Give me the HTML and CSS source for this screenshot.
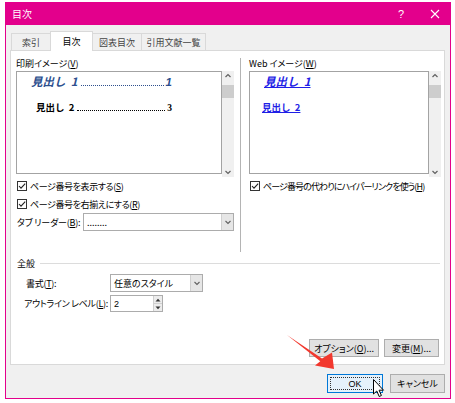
FILE: index.html
```html
<!DOCTYPE html>
<html lang="ja">
<head>
<meta charset="utf-8">
<link rel="stylesheet" href="styles.css">
</head>
<body>
<div class="win">
  <div class="titlebar">
    <span class="title">目次</span>
    <span class="tb-btn help">?</span>
    <span class="tb-btn close"><svg width="10" height="10" viewBox="0 0 10 10"><path d="M1 1L9 9M9 1L1 9" stroke="#fff" stroke-width="1.1" fill="none"/></svg></span>
  </div>
  <div class="client">
    <div class="tabs">
      <div class="tab w1">索引</div>
      <div class="tab w2 active">目次</div>
      <div class="tab w3">図表目次</div>
      <div class="tab w4">引用文献一覧</div>
    </div>
    <div class="panel">
      <div class="cols">
        <div class="col left">
          <div class="lbl">印刷イメージ(<u>V</u>)</div>
          <div class="preview">
            <div class="pbox">
              <div class="toc1"><span class="h">見出し&nbsp;&nbsp;1</span><span class="dots"></span><span class="n">1</span></div>
              <div class="toc2"><span class="h">見出し&nbsp;&nbsp;2</span><span class="dots"></span><span class="n">3</span></div>
            </div>
            <div class="vscroll">
              <svg class="chev" width="12" height="10" viewBox="0 0 12 10"><path d="M3.5 6L6 3.5L8.5 6" stroke="#606060" stroke-width="1.2" fill="none"/></svg>
              <div class="thumb"></div>
              <div class="spacer"></div>
              <svg class="chev" width="12" height="10" viewBox="0 0 12 10"><path d="M3.5 4L6 6.5L8.5 4" stroke="#606060" stroke-width="1.2" fill="none"/></svg>
            </div>
          </div>
          <div class="chk r1"><svg class="cb" width="10" height="10" viewBox="0 0 10 10"><rect x="0.5" y="0.5" width="9" height="9" fill="#fff" stroke="#333"/><path d="M2 5L4 7.2L8.2 2.6" stroke="#222" stroke-width="1.1" fill="none"/></svg><span>ページ番号を表示する(<u>S</u>)</span></div>
          <div class="chk r2"><svg class="cb" width="10" height="10" viewBox="0 0 10 10"><rect x="0.5" y="0.5" width="9" height="9" fill="#fff" stroke="#333"/><path d="M2 5L4 7.2L8.2 2.6" stroke="#222" stroke-width="1.1" fill="none"/></svg><span>ページ番号を右揃えにする(<u>R</u>)</span></div>
          <div class="leader-row">
            <span class="leader-lbl">タブ リーダー(<u>B</u>):</span>
            <div class="combo wide">
              <span class="combo-val">........</span>
              <span class="combo-btn"><svg width="8" height="6" viewBox="0 0 8 6"><path d="M1.5 2L4 4.5L6.5 2" stroke="#606060" stroke-width="1.1" fill="none"/></svg></span>
            </div>
          </div>
        </div>
        <div class="col right">
          <div class="lbl">Web イメージ(<u>W</u>)</div>
          <div class="preview">
            <div class="pbox">
              <div class="web1">見出し&nbsp;&nbsp;1</div>
              <div class="web2">見出し&nbsp;&nbsp;2</div>
            </div>
            <div class="vscroll">
              <svg class="chev" width="12" height="10" viewBox="0 0 12 10"><path d="M3.5 6L6 3.5L8.5 6" stroke="#606060" stroke-width="1.2" fill="none"/></svg>
              <div class="thumb"></div>
              <div class="spacer"></div>
              <svg class="chev" width="12" height="10" viewBox="0 0 12 10"><path d="M3.5 4L6 6.5L8.5 4" stroke="#606060" stroke-width="1.2" fill="none"/></svg>
            </div>
          </div>
          <div class="chk r1 rr"><svg class="cb" width="10" height="10" viewBox="0 0 10 10"><rect x="0.5" y="0.5" width="9" height="9" fill="#fff" stroke="#333"/><path d="M2 5L4 7.2L8.2 2.6" stroke="#222" stroke-width="1.1" fill="none"/></svg><span>ページ番号の代わりにハイパーリンクを使う(<u>H</u>)</span></div>
        </div>
      </div>
      <div class="group-head"><span>全般</span><div class="gline"></div></div>
      <div class="frow f1">
        <span class="flbl">書式(<u>T</u>):</span>
        <div class="combo fmt">
          <span class="combo-val">任意のスタイル</span>
          <span class="combo-btn"><svg width="8" height="6" viewBox="0 0 8 6"><path d="M1.5 2L4 4.5L6.5 2" stroke="#606060" stroke-width="1.1" fill="none"/></svg></span>
        </div>
      </div>
      <div class="frow f2">
        <span class="flbl">アウトライン レベル(<u>L</u>):</span>
        <div class="spin">
          <span class="spin-val">2</span>
          <span class="spin-btns">
            <span class="sb"><svg width="6" height="4" viewBox="0 0 6 4"><path d="M0.5 3.5L3 0.8L5.5 3.5Z" fill="#333"/></svg></span>
            <span class="sb"><svg width="6" height="4" viewBox="0 0 6 4"><path d="M0.5 0.5L3 3.2L5.5 0.5Z" fill="#333"/></svg></span>
          </span>
        </div>
      </div>
      <div class="btnrow">
        <button class="btn opt">オプション(<u>O</u>)...</button>
        <button class="btn chg">変更(<u>M</u>)...</button>
      </div>
    </div>
    <div class="dlg-btns">
      <button class="btn ok"><span class="focus">OK</span></button>
      <button class="btn cancel">キャンセル</button>
    </div>
  </div>
</div>
<svg class="overlay" width="455" height="403" viewBox="0 0 455 403">
  <polygon points="287,335 320.3,361.2 315,365.5 334,369 332,352.5 322,358.6" fill="#f2382e"/>
  <path d="M373.5 379.5 L373.5 394 L376.8 391 L379.2 396.5 L381.4 395.5 L379.1 390.2 L383.5 390.2 Z" fill="#fff" stroke="#000" stroke-width="1"/>
</svg>
</body>
</html>
```

FILE: styles.css
```css
* { box-sizing: border-box; }
html, body { margin: 0; padding: 0; background: #fff; }
body {
  position: relative;
  width: 455px;
  height: 403px;
  overflow: hidden;
  font-family: "Noto Sans CJK JP", "Noto Sans", sans-serif;
  font-size: 9px;
  color: #000;
  font-feature-settings: "palt";
  white-space: nowrap;
}
u { text-decoration: underline; text-underline-offset: 1px; }

.win {
  margin: 2px 0 0 5px;
  width: 446px;
  height: 397px;
  border: 1px solid #e3008c;
  border-top: 0;
  background: #f0f0f0;
  display: flex;
  flex-direction: column;
}
.titlebar {
  height: 23px;
  flex: none;
  background: #e3008c;
  color: #fff;
  display: flex;
  align-items: center;
  padding-left: 6px;
}
.title { font-size: 10px; flex: 1; }
.tb-btn {
  width: 30px;
  height: 23px;
  display: flex;
  align-items: center;
  justify-content: center;
  font-family: "Liberation Sans", sans-serif;
  font-size: 11px;
}
.help { margin-right: 4px; }

.client {
  flex: 1;
  display: flex;
  flex-direction: column;
  padding: 0 5px 5px 4px;
}
.tabs {
  height: 25px;
  flex: none;
  padding: 6px 0 0 1px;
  display: flex;
  align-items: flex-end;
}
.tab {
  height: 17px;
  border: 1px solid #d9d9d9;
  border-bottom: 0;
  margin-left: -1px;
  background: #f0f0f0;
  color: #444;
  display: flex;
  align-items: center;
  justify-content: center;
  font-size: 9px;
  position: relative;
}
.tab:first-child { margin-left: 0; }
.tab.active {
  height: 20px;
  margin-bottom: -1px;
  background: #fff;
  color: #000;
  z-index: 1;
}
.w1 { width: 40px; }
.w2 { width: 43px; }
.w3 { width: 50px; }
.w4 { width: 65px; }

.panel {
  height: 315px;
  flex: none;
  background: #fff;
  border: 1px solid #d9d9d9;
  padding: 6px 3px 7px 5px;
  display: flex;
  flex-direction: column;
}
.cols {
  display: flex;
  height: 195px;
  flex: none;
}
.col.left {
  width: 225px;
  padding-right: 6px;
  border-right: 1px solid #b4b4b4;
  margin-top: 1px;
}
.col.left > .lbl { margin-top: -1px; }
.col.right {
  flex: 1;
  min-width: 0;
  padding-left: 8px;
}
.lbl {
  height: 14px;
  line-height: 14px;
}
.preview {
  height: 106px;
  display: flex;
}
.pbox {
  flex: 1;
  height: 103px;
  background: #fff;
  border: 1px solid #a3a3a3;
  padding: 1px 0 0 14px;
}
.vscroll {
  width: 12px;
  background: #f0f0f0;
  display: flex;
  flex-direction: column;
  align-items: center;
}
.chev { display: block; flex: none; }
.thumb {
  width: 12px;
  height: 13px;
  margin-top: 4px;
  background: #cdcdcd;
}
.spacer { flex: 1; }

.toc1, .toc2 {
  display: flex;
  align-items: baseline;
  font-feature-settings: normal;
}
.toc1 {
  width: 141px;
  height: 16px;
  line-height: 16px;
  font-size: 11.5px;
  font-weight: bold;
  font-style: italic;
  color: #2d4f8e;
}
.toc1 .n { font-family: "Liberation Sans", sans-serif; }
.toc2 {
  width: 136px;
  height: 16px;
  line-height: 16px;
  margin: 10px 0 0 5px;
  font-size: 9.5px;
  font-weight: bold;
  color: #000;
}
.toc2 .n { font-family: "Liberation Serif", serif; }
.dots {
  flex: 1;
  height: 2px;
  margin: 0 2px 0 3px;
  border-bottom: 1.5px dotted currentColor;
}
.h, .n { flex: none; }

.web1 {
  height: 16px;
  line-height: 16px;
  font-size: 11.5px;
  font-weight: bold;
  font-style: italic;
  color: #1f1fe6;
  text-decoration: underline;
  font-feature-settings: normal;
}
.web2 {
  height: 16px;
  line-height: 16px;
  margin: 10px 0 0 -2px;
  font-size: 9.5px;
  font-weight: bold;
  color: #1f1fe6;
  text-decoration: underline;
  font-feature-settings: normal;
}

.chk {
  display: flex;
  align-items: center;
  height: 14px;
  padding-left: 1px;
  letter-spacing: -0.4px;
}
.chk.rr { letter-spacing: -0.9px; }
.chk.r1 { margin-top: 2px; }
.chk.r2 { margin-top: 4px; }
.cb { display: block; flex: none; margin-right: 3px; }

.leader-row {
  display: flex;
  align-items: center;
  margin-top: 2px;
  height: 18px;
  padding-left: 1px;
}
.leader-lbl { width: 66px; letter-spacing: -0.2px; }
.combo {
  height: 18px;
  border: 1px solid #acacac;
  background: #fff;
  display: flex;
  align-items: stretch;
}
.combo.wide { flex: 1; }
.combo.fmt { width: 93px; }
.combo-val {
  flex: 1;
  padding-left: 3px;
  display: flex;
  align-items: center;
}
.combo-btn {
  width: 12px;
  background: #e6e6e6;
  border-left: 1px solid #d0d0d0;
  display: flex;
  align-items: center;
  justify-content: center;
}
.combo-btn svg { display: block; }

.group-head {
  display: flex;
  align-items: center;
  height: 12px;
  margin-top: 5px;
  padding-left: 1px;
}
.gline {
  flex: 1;
  height: 1px;
  background: #dcdcdc;
  margin: 0 1px 0 5px;
}
.frow {
  display: flex;
  align-items: center;
  padding-left: 8px;
}
.f1 { margin-top: 5px; height: 18px; }
.f2 { margin-top: 3px; height: 17px; }
.flbl { width: 86px; letter-spacing: -0.3px; }
.f1 .flbl { padding-left: 2px; }
.spin {
  width: 53px;
  height: 17px;
  border: 1px solid #acacac;
  background: #fff;
  display: flex;
}
.spin-val {
  flex: 1;
  padding-left: 3px;
  display: flex;
  align-items: center;
  font-family: "Liberation Sans", sans-serif;
  font-size: 9px;
}
.spin-btns {
  width: 9px;
  display: flex;
  flex-direction: column;
  border-left: 1px solid #d0d0d0;
}
.sb {
  flex: 1;
  background: #ececec;
  display: flex;
  align-items: center;
  justify-content: center;
}
.sb + .sb { border-top: 1px solid #d0d0d0; }
.sb svg { display: block; }

.btnrow {
  margin-top: auto;
  display: flex;
  justify-content: flex-end;
  gap: 5px;
  margin-right: 2px;
}
.btn {
  font-family: "Noto Sans CJK JP", "Noto Sans", sans-serif;
  font-size: 9px;
  font-feature-settings: "palt";
  color: #000;
  background: #e1e1e1;
  border: 1px solid #adadad;
  padding: 0;
  margin: 0;
  height: 18px;
  display: flex;
  align-items: center;
  justify-content: center;
  white-space: nowrap;
}
.opt { width: 70px; }
.chg { width: 55px; }

.dlg-btns {
  margin-top: 9px;
  display: flex;
  justify-content: flex-end;
  gap: 7px;
}
.dlg-btns .btn { height: 19px; }
.ok {
  width: 56px;
  background: #e5f1fb;
  border-color: #0078d7;
  padding: 2px;
}
.focus {
  flex: 1;
  align-self: stretch;
  border: 1px dotted #333;
  display: flex;
  align-items: center;
  justify-content: center;
  font-family: "Liberation Sans", sans-serif;
}
.cancel { width: 55px; }

.overlay {
  position: absolute;
  left: 0;
  top: 0;
  pointer-events: none;
}
```
